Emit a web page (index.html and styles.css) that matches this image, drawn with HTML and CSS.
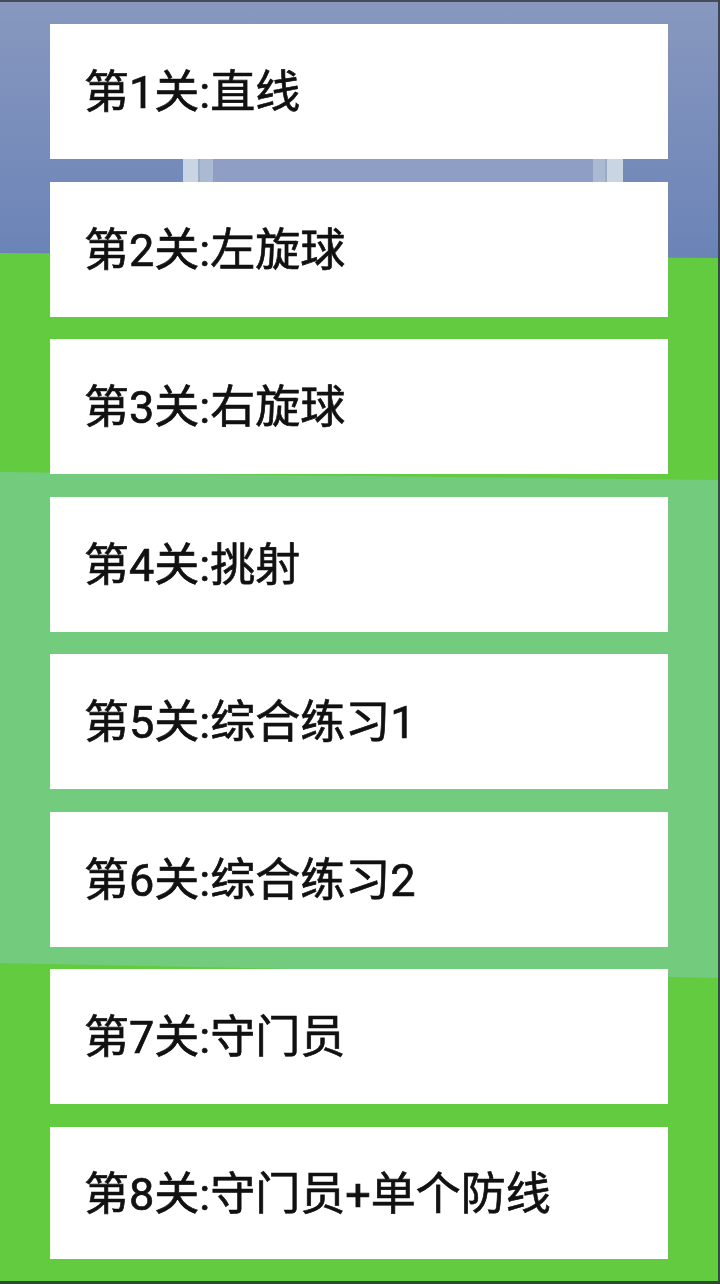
FILE: index.html
```html
<!DOCTYPE html>
<html lang="zh-CN">
<head>
<meta charset="utf-8">
<title>关卡选择</title>
<link rel="stylesheet" href="styles.css">
</head>
<body>
<div class="scene" aria-hidden="true">
  <svg viewBox="0 0 720 1284" preserveAspectRatio="none" width="720" height="1284">
    <defs>
      <linearGradient id="sky" x1="0" y1="0" x2="0" y2="1">
        <stop offset="0" stop-color="#8898bf"/>
        <stop offset="1" stop-color="#6a83b7"/>
      </linearGradient>
    </defs>
    <rect x="0" y="0" width="720" height="262" fill="url(#sky)"/>
    <!-- goal mouth -->
    <rect x="213" y="40" width="380" height="220" fill="#8e9ec4"/>
    <!-- left post -->
    <rect x="183" y="40" width="15" height="220" fill="#c9d5e2"/>
    <rect x="198" y="40" width="2" height="220" fill="#9aabc4"/>
    <rect x="200" y="40" width="13" height="220" fill="#aabad2"/>
    <!-- right post -->
    <rect x="593" y="40" width="12" height="220" fill="#aabad2"/>
    <rect x="605" y="40" width="2" height="220" fill="#9aabc4"/>
    <rect x="607" y="40" width="16" height="220" fill="#c9d5e2"/>
    <!-- pitch -->
    <polygon points="0,253 720,258 720,1284 0,1284" fill="#62cb40"/>
    <polygon points="0,472 720,480 720,978 0,963" fill="#73cc7d"/>
    <!-- screen edges -->
    <rect x="0" y="0" width="720" height="2" fill="#474c58"/>
    <rect x="718" y="0" width="2" height="1284" fill="#3e4452"/>
    <rect x="0" y="1281" width="720" height="3" fill="#2e4a2c"/>
  </svg>
</div>

<ul class="levels">
  <li class="level"><span class="label">第1关:直线</span></li>
  <li class="level"><span class="label">第2关:左旋球</span></li>
  <li class="level"><span class="label">第3关:右旋球</span></li>
  <li class="level"><span class="label">第4关:挑射</span></li>
  <li class="level"><span class="label">第5关:综合练习1</span></li>
  <li class="level"><span class="label">第6关:综合练习2</span></li>
  <li class="level"><span class="label">第7关:守门员</span></li>
  <li class="level level-last"><span class="label">第8关:守门员+单个防线</span></li>
</ul>
</body>
</html>
```

FILE: styles.css
```css
html, body {
  margin: 0;
  padding: 0;
  width: 720px;
  height: 1284px;
  overflow: hidden;
  background: #62cb40;
  font-family: Roboto, "Noto Sans CJK SC", "Noto Sans", sans-serif;
}

.scene {
  position: fixed;
  inset: 0;
  z-index: 0;
}

.scene svg {
  display: block;
}

.levels {
  position: relative;
  z-index: 1;
  list-style: none;
  margin: 0;
  padding: 24px 52px 0 50px;
  display: flex;
  flex-direction: column;
  gap: 22.5px;
}

.level {
  height: 135px;
  background: #ffffff;
  display: flex;
  align-items: center;
  padding: 2px 0 0 34px;
  box-sizing: border-box;
}

.level-last {
  height: 132px;
  padding-top: 4px;
}

.label {
  font-size: 45px;
  font-weight: 400;
  line-height: 1;
  color: #111111;
  -webkit-text-stroke: 0.7px #111111;
}
```
